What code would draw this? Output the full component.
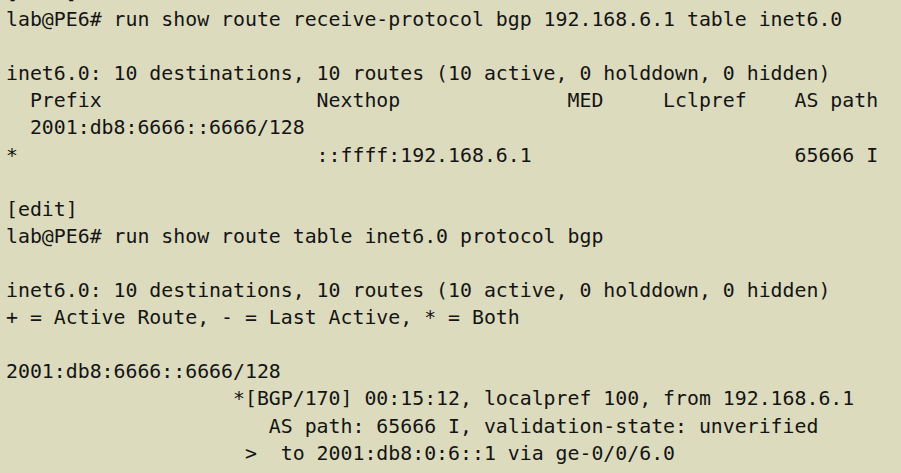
import React from "react";

const lines: string[] = [
  "[edit]",
  "lab@PE6# run show route receive-protocol bgp 192.168.6.1 table inet6.0",
  "",
  "inet6.0: 10 destinations, 10 routes (10 active, 0 holddown, 0 hidden)",
  "  Prefix                  Nexthop              MED     Lclpref    AS path",
  "  2001:db8:6666::6666/128",
  "*                         ::ffff:192.168.6.1                      65666 I",
  "",
  "[edit]",
  "lab@PE6# run show route table inet6.0 protocol bgp",
  "",
  "inet6.0: 10 destinations, 10 routes (10 active, 0 holddown, 0 hidden)",
  "+ = Active Route, - = Last Active, * = Both",
  "",
  "2001:db8:6666::6666/128",
  "                   *[BGP/170] 00:15:12, localpref 100, from 192.168.6.1",
  "                      AS path: 65666 I, validation-state: unverified",
  "                    >  to 2001:db8:0:6::1 via ge-0/0/6.0",
];

export default function App() {
  return (
    <div className="w-[901px] h-[473px] overflow-hidden bg-[#dcdbbd]">
      <div
        className="mt-[-21px] pl-[6px] text-[#141414] text-[19.85px] leading-[27.1px] whitespace-pre"
        style={{ fontFamily: '"DejaVu Sans Mono", monospace' }}
      >
        {lines.map((l, i) => (
          <div key={i} className="h-[27.1px]">
            {l || " "}
          </div>
        ))}
      </div>
    </div>
  );
}
